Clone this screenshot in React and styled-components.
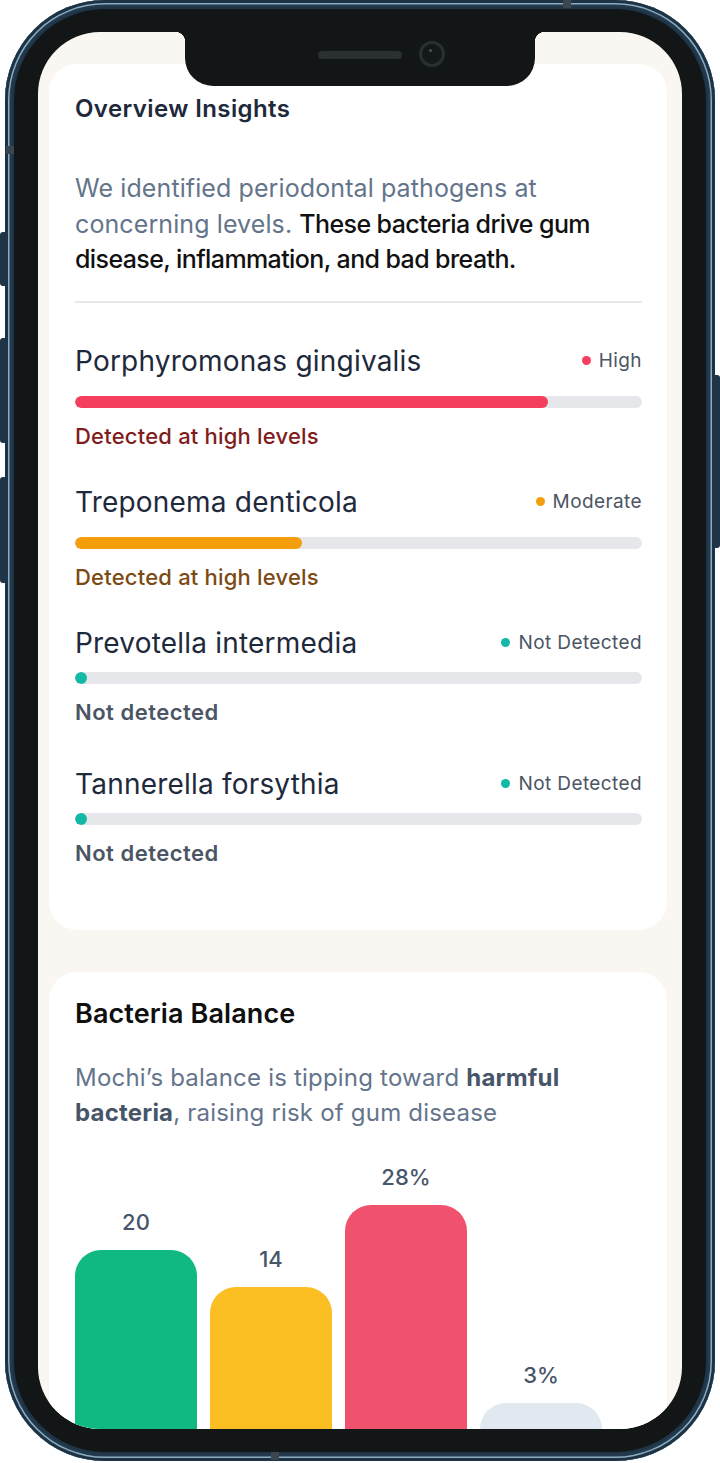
import React from 'react';
import styled, { createGlobalStyle } from 'styled-components';

const GlobalStyle = createGlobalStyle`
  html, body {
    margin: 0;
    padding: 0;
    background: #ffffff;
  }
  body {
    font-family: Inter, "Noto Sans", "Liberation Sans", sans-serif;
    -webkit-font-smoothing: antialiased;
  }
  * { box-sizing: border-box; }
`;

const pathogens = [
  { name: 'Porphyromonas gingivalis', level: 'High', color: '#f43f5e', value: 83.5, note: 'Detected at high levels', noteColor: '#7f1d1d' },
  { name: 'Treponema denticola', level: 'Moderate', color: '#f59e0b', value: 40, note: 'Detected at high levels', noteColor: '#7c4a14' },
  { name: 'Prevotella intermedia', level: 'Not Detected', color: '#14b8a6', value: 0, note: 'Not detected', noteColor: '#4b5563' },
  { name: 'Tannerella forsythia', level: 'Not Detected', color: '#14b8a6', value: 0, note: 'Not detected', noteColor: '#4b5563' },
];

const balance = [
  { label: '20', color: '#10b981', height: 190 },
  { label: '14', color: '#fbbf24', height: 153 },
  { label: '28%', color: '#f0516d', height: 235 },
  { label: '3%', color: '#e2e8f0', height: 37 },
];

const App = () => {
  return (
    <Page>
      <GlobalStyle />
      <Phone>
        <SideButton side="left" top={232} h={54} />
        <SideButton side="left" top={338} h={105} />
        <SideButton side="left" top={477} h={106} />
        <SideButton side="right" top={375} h={173} />
        <RimMark style={{ left: 558, top: 0, width: 8, height: 8 }} />
        <RimMark style={{ left: 1, top: 146, width: 8, height: 8 }} />
        <RimMark style={{ left: 266, top: 1452, width: 8, height: 8 }} />
        <Bezel>
          <Screen>
            <Notch>
              <Speaker />
              <Camera />
            </Notch>

            <Content>
              <Card pt={31} pb={58}>
                <CardTitle>Overview Insights</CardTitle>
                <Intro>
                  We identified periodontal pathogens at concerning levels.{' '}
                  <strong>These bacteria drive gum disease, inflammation, and bad breath.</strong>
                </Intro>
                <Divider />

                <List>
                  {pathogens.map((p) => (
                    <Item key={p.name}>
                      <NameRow>
                        <Name>{p.name}</Name>
                        <Level>
                          <Dot color={p.color} />
                          {p.level}
                        </Level>
                      </NameRow>
                      <Track tight={p.value === 0}>
                        <Fill color={p.color} style={{ width: `${p.value}%` }} />
                      </Track>
                      <Note color={p.noteColor} strong={p.value === 0}>{p.note}</Note>
                    </Item>
                  ))}
                </List>
              </Card>

              <Card pt={27} pb={0}>
                <BalanceTitle>Bacteria Balance</BalanceTitle>
                <BalanceText>
                  Mochi’s balance is tipping toward <b>harmful bacteria</b>, raising risk of gum disease
                </BalanceText>
                <Chart>
                  {balance.map((b) => (
                    <Column key={b.label}>
                      <BarLabel>{b.label}</BarLabel>
                      <Bar color={b.color} style={{ height: b.height }} />
                    </Column>
                  ))}
                </Chart>
              </Card>
            </Content>
          </Screen>
        </Bezel>
      </Phone>
    </Page>
  );
};

const Page = styled.div`
  width: 720px;
  height: 1463px;
  padding-left: 5px;
  overflow: hidden;
`;

const Phone = styled.div`
  position: relative;
  width: 710px;
  height: 1461px;
  border-radius: 100px;
  background: #1f3547;
  padding: 9px;
  box-shadow: inset 0 0 0 3px #1d3242, inset 0 0 0 4.5px #8bacc3, inset 0 0 0 7px #233a4c;
`;

const SideButton = styled.div`
  position: absolute;
  top: ${(p) => p.top}px;
  height: ${(p) => p.h}px;
  width: 7px;
  background: #1f3547;
  ${(p) => (p.side === 'left' ? 'left: -5px; border-radius: 3px 0 0 3px;' : 'right: -5px; border-radius: 0 3px 3px 0;')}
`;

const RimMark = styled.div`
  position: absolute;
  background: #3a4650;
`;

const Bezel = styled.div`
  width: 100%;
  height: 100%;
  border-radius: 91px;
  background: #121617;
  padding: 23px 24px;
`;

const Screen = styled.div`
  position: relative;
  width: 100%;
  height: 100%;
  border-radius: 62px;
  background: #faf7f2;
  overflow: hidden;
`;

const Notch = styled.div`
  position: absolute;
  top: 0;
  left: 147px;
  width: 350px;
  height: 54px;
  background: #121617;
  border-radius: 0 0 28px 28px;
  z-index: 2;

  &::before,
  &::after {
    content: '';
    position: absolute;
    top: 0;
    width: 10px;
    height: 10px;
  }
  &::before {
    left: -10px;
    background: radial-gradient(circle at 0 100%, transparent 10px, #121617 10.5px);
  }
  &::after {
    right: -10px;
    background: radial-gradient(circle at 100% 100%, transparent 10px, #121617 10.5px);
  }
`;

const Speaker = styled.div`
  position: absolute;
  left: 133px;
  top: 19px;
  width: 84px;
  height: 8px;
  border-radius: 4px;
  background: #2a2f32;
`;

const Camera = styled.div`
  position: absolute;
  left: 234px;
  top: 9px;
  width: 26px;
  height: 26px;
  border-radius: 50%;
  border: 3px solid #2a2f32;
  background: #141819;

  &::after {
    content: '';
    position: absolute;
    left: 7px;
    top: 5px;
    width: 3px;
    height: 3px;
    border-radius: 50%;
    background: #4a5358;
  }
`;

const Content = styled.div`
  padding: 32px 15px 0 11px;
  display: flex;
  flex-direction: column;
  gap: 42px;
`;

const Card = styled.section`
  background: #ffffff;
  border-radius: 28px;
  padding: ${(p) => p.pt}px 25px ${(p) => p.pb}px 26px;
`;

const CardTitle = styled.h2`
  margin: 0;
  font-size: 24px;
  line-height: 28px;
  font-weight: 600;
  color: #1e293b;
  letter-spacing: 0.4px;
`;

const Intro = styled.p`
  margin: 48px 0 0;
  font-size: 25px;
  line-height: 35.5px;
  font-weight: 400;
  color: #64748b;
  letter-spacing: 0.1px;

  strong {
    font-weight: 500;
    color: #111111;
    letter-spacing: -0.6px;
  }
`;

const Divider = styled.hr`
  margin: 23px 0 0;
  border: 0;
  height: 2px;
  background: #e6e8ec;
`;

const List = styled.div`
  margin-top: 41px;
  display: flex;
  flex-direction: column;
  gap: 36px;
`;

const Item = styled.div`
  min-height: 105px;
  display: flex;
  flex-direction: column;
`;

const NameRow = styled.div`
  display: flex;
  align-items: center;
  justify-content: space-between;
  height: 34px;
`;

const Name = styled.span`
  font-size: 28px;
  font-weight: 400;
  color: #1e293b;
  letter-spacing: 0.2px;
`;

const Level = styled.span`
  display: flex;
  align-items: center;
  gap: 8px;
  font-size: 19px;
  color: #4b5563;
  letter-spacing: 0.4px;
`;

const Dot = styled.i`
  width: 9px;
  height: 9px;
  border-radius: 50%;
  background: ${(p) => p.color};
`;

const Track = styled.div`
  margin-top: ${(p) => (p.tight ? 12 : 18)}px;
  height: 12px;
  border-radius: 6px;
  background: #e5e7eb;
  overflow: hidden;
`;

const Fill = styled.div`
  height: 100%;
  min-width: 12px;
  border-radius: 6px;
  background: ${(p) => p.color};
`;

const Note = styled.div`
  margin-top: 15px;
  font-size: 22px;
  line-height: 26px;
  font-weight: ${(p) => (p.strong ? 600 : 500)};
  color: ${(p) => p.color};
  letter-spacing: ${(p) => (p.strong ? 0.5 : 0.2)}px;
`;

const BalanceTitle = styled.h2`
  margin: 0;
  font-size: 27px;
  line-height: 30px;
  font-weight: 600;
  color: #0f0f10;
  letter-spacing: 0.1px;
`;

const BalanceText = styled.p`
  margin: 31px 0 0;
  font-size: 24px;
  line-height: 35px;
  color: #64748b;
  letter-spacing: 0.2px;

  b {
    font-weight: 700;
    color: #475569;
  }
`;

const Chart = styled.div`
  margin-top: 35px;
  display: flex;
  align-items: flex-end;
  gap: 13px;
`;

const Column = styled.div`
  width: 122px;
  display: flex;
  flex-direction: column;
  align-items: center;
`;

const BarLabel = styled.div`
  font-size: 22px;
  line-height: 24px;
  font-weight: 500;
  color: #475569;
  margin-bottom: 16px;
`;

const Bar = styled.div`
  width: 100%;
  border-radius: 26px 26px 0 0;
  background: ${(p) => p.color};
`;

export default App;
